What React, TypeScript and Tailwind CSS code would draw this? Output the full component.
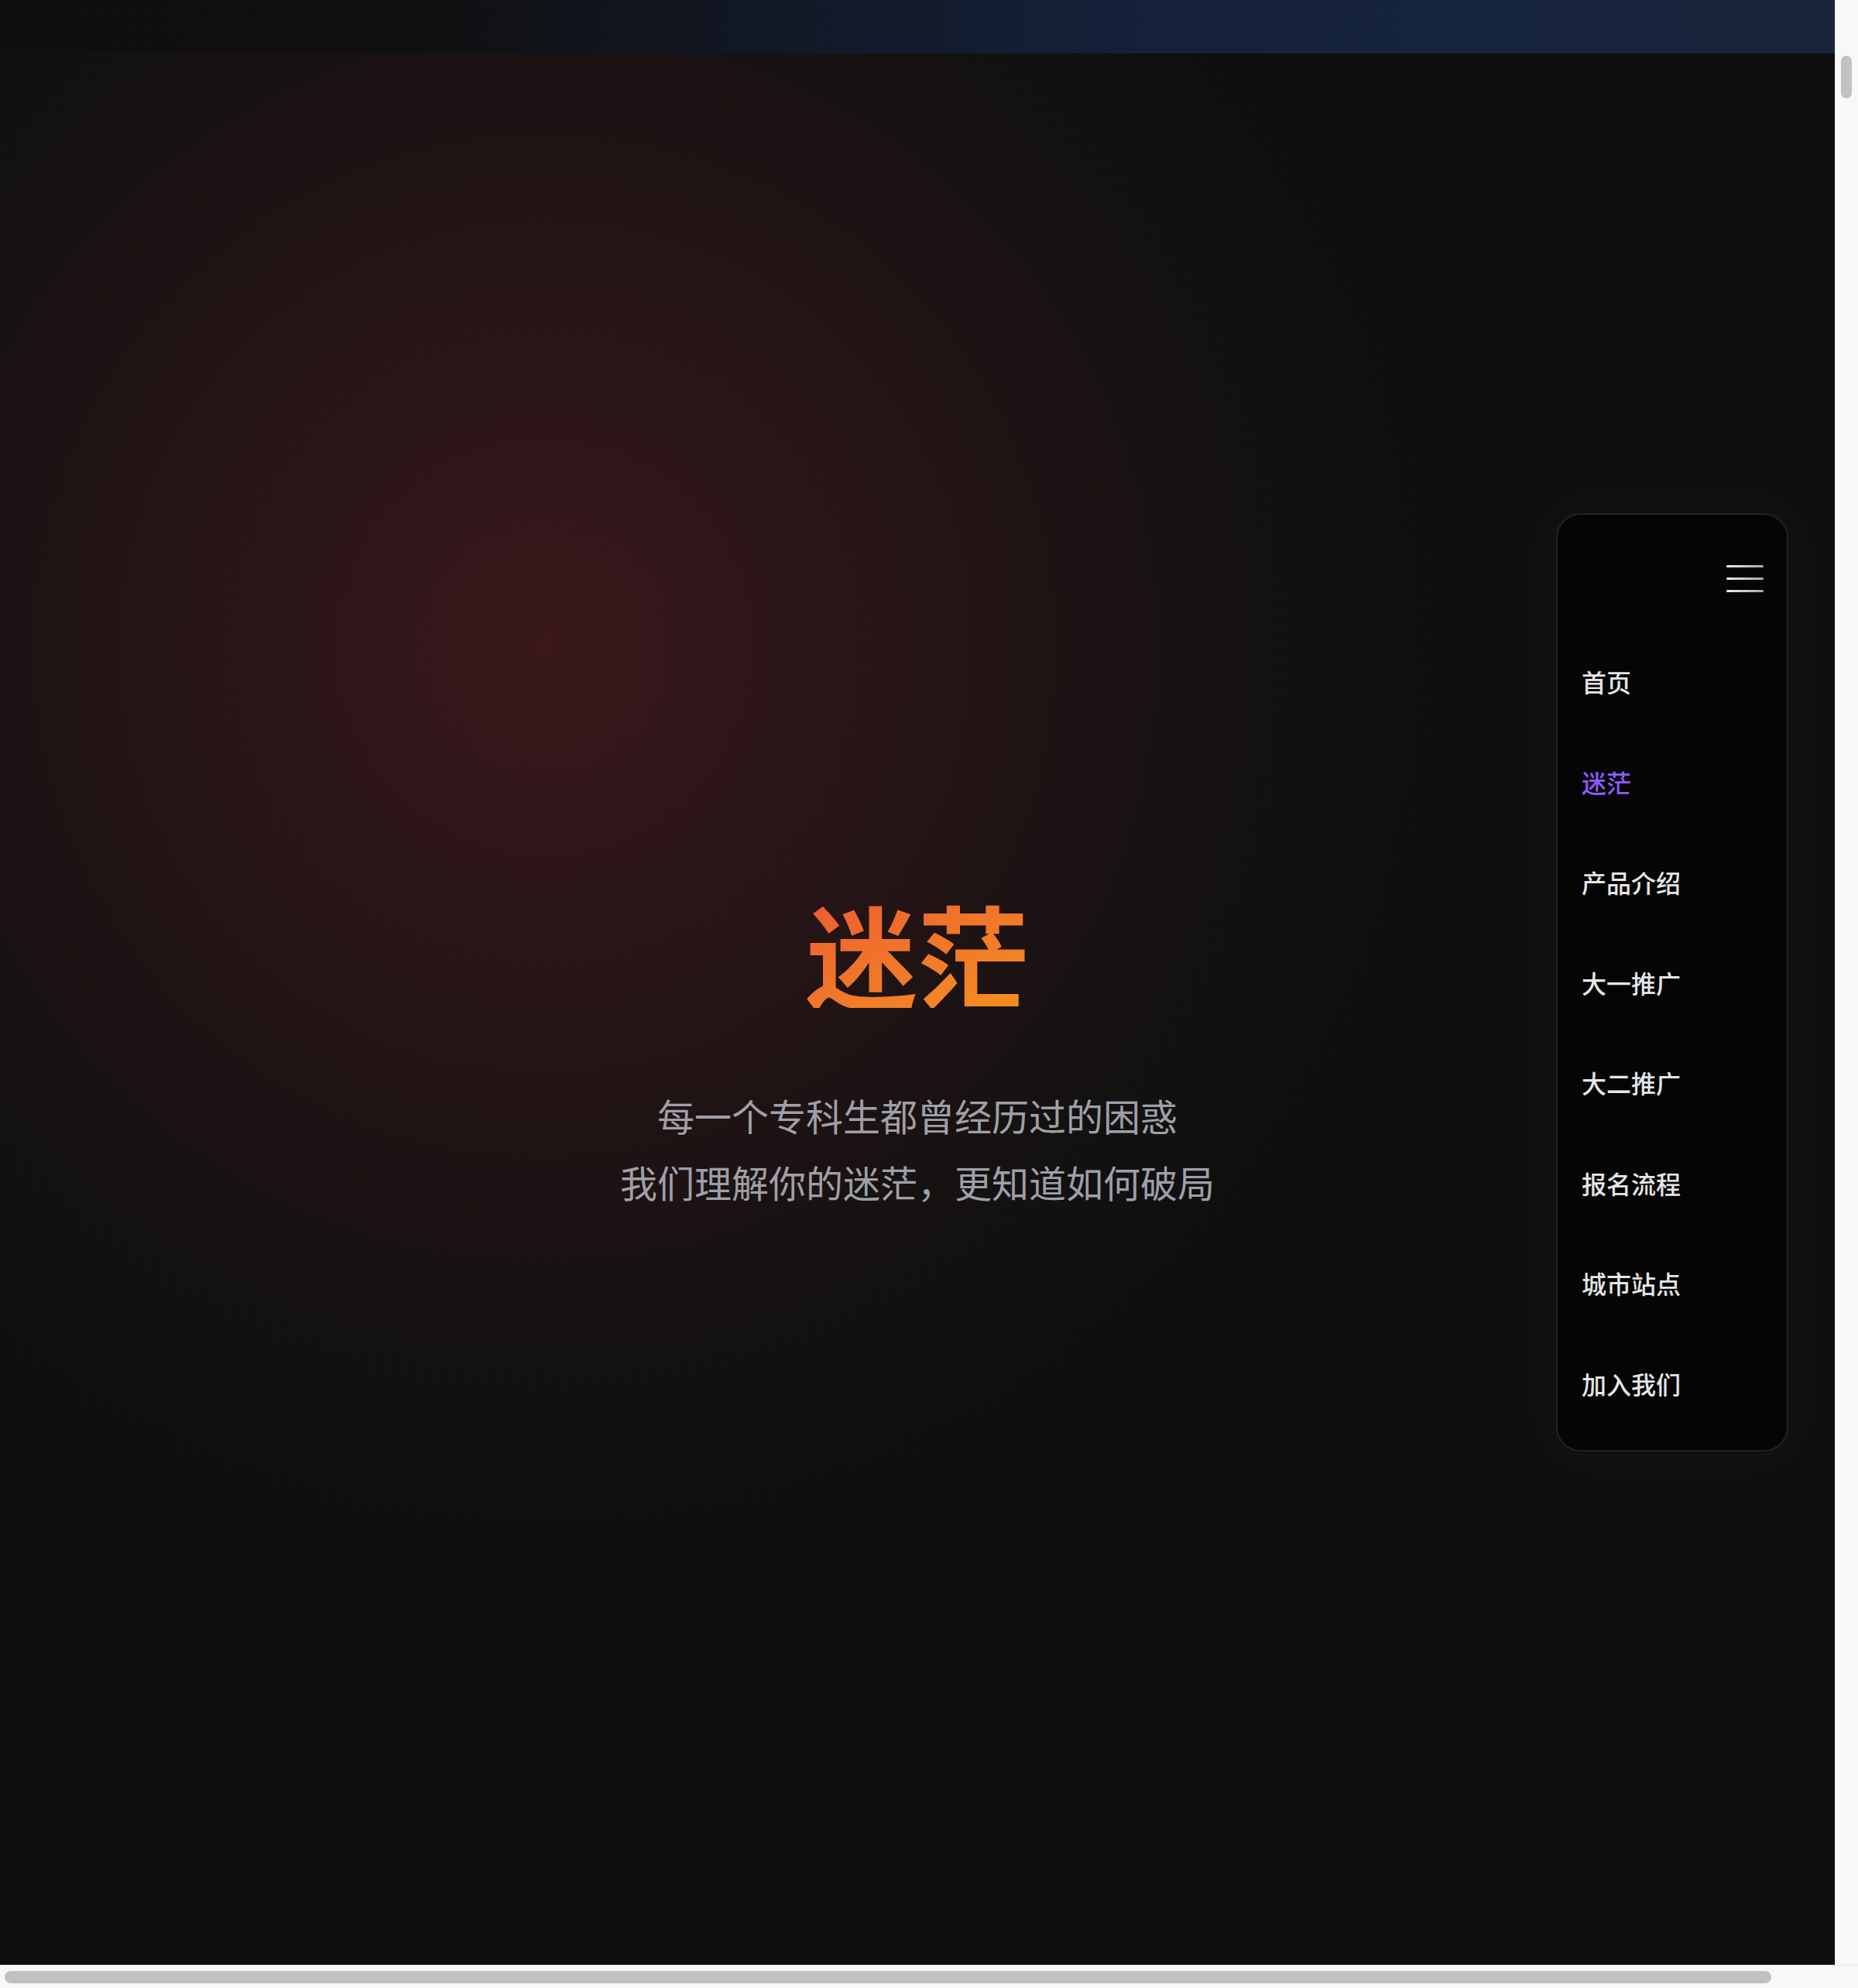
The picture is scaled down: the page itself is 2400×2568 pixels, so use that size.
const NAV = ["首页", "迷茫", "产品介绍", "大一推广", "大二推广", "报名流程", "城市站点", "加入我们"];

function Burger() {
  return (
    <div className="flex w-[48px] flex-col gap-[13px]">
      <span className="block h-[3px] rounded-full bg-gradient-to-r from-[#ececec] to-[#a8a8a8]" />
      <span className="block h-[3px] rounded-full bg-gradient-to-r from-[#ececec] to-[#a8a8a8]" />
      <span className="block h-[3px] rounded-full bg-gradient-to-r from-[#ececec] to-[#a8a8a8]" />
    </div>
  );
}

function SideNav({ active = "迷茫" }: { active?: string }) {
  return (
    <nav className="absolute right-[60px] top-[594px] w-[300px] rounded-[32px] border-2 border-[#222222] bg-[#050505] pb-[62px] pl-[31px] pr-[30px] pt-[65px] shadow-[0_0_70px_24px_rgba(255,255,255,0.02)]">
      <div className="flex justify-end">
        <Burger />
      </div>
      <ul className="mt-[91px] flex flex-col gap-[81.5px]">
        {NAV.map((n) => (
          <li
            key={n}
            className={
              "text-[32px] font-medium leading-[48px] " +
              (n === active ? "text-[#8b5cf6]" : "text-[#e6e6e6]")
            }
          >
            {n}
          </li>
        ))}
      </ul>
    </nav>
  );
}

export default function App() {
  return (
    <div
      className="flex h-[2568px] w-[2400px] flex-col overflow-hidden bg-[#f8f8f8]"
      style={{ fontFamily: '"Noto Sans CJK SC", "Noto Sans", sans-serif' }}
    >
      <div className="flex min-h-0 flex-1">
        <main className="flex w-[2370px] flex-col">
          <div className="h-[69px] bg-[linear-gradient(90deg,#0f0f0f_0%,#101010_22%,#111723_40%,#15213a_62%,#17243f_80%,#192438_100%)]" />
          <section className="relative flex flex-1 flex-col items-center bg-[radial-gradient(circle_1180px_at_704px_766px,#3a181b_0%,#2c1618_28%,#1f1314_55%,#141111_78%,#0f0f0f_100%)] pt-[1089px]">
            <h1 className="bg-gradient-to-br from-[#ec5a30] to-[#f4901e] bg-clip-text text-[144px] font-bold leading-none text-transparent">
              迷茫
            </h1>
            <p className="mt-[95px] text-center text-[48px] leading-[86px] text-[#9ea0a8]">
              每一个专科生都曾经历过的困惑
              <br />
              我们理解你的迷茫，更知道如何破局
            </p>
            <SideNav />
          </section>
        </main>
        <div className="w-[30px] border-l border-[#e6e6e6] bg-[#f8f8f8] pl-[7px] pt-[72px]">
          <div className="h-[55px] w-[14px] rounded-full bg-[#c1c1c1]" />
        </div>
      </div>
      <div className="h-[30px] border-t border-[#e6e6e6] bg-[#f8f8f8] pl-[6px] pt-[7px]">
        <div className="h-[16px] w-[2282px] rounded-full bg-[#c1c1c1]" />
      </div>
    </div>
  );
}
